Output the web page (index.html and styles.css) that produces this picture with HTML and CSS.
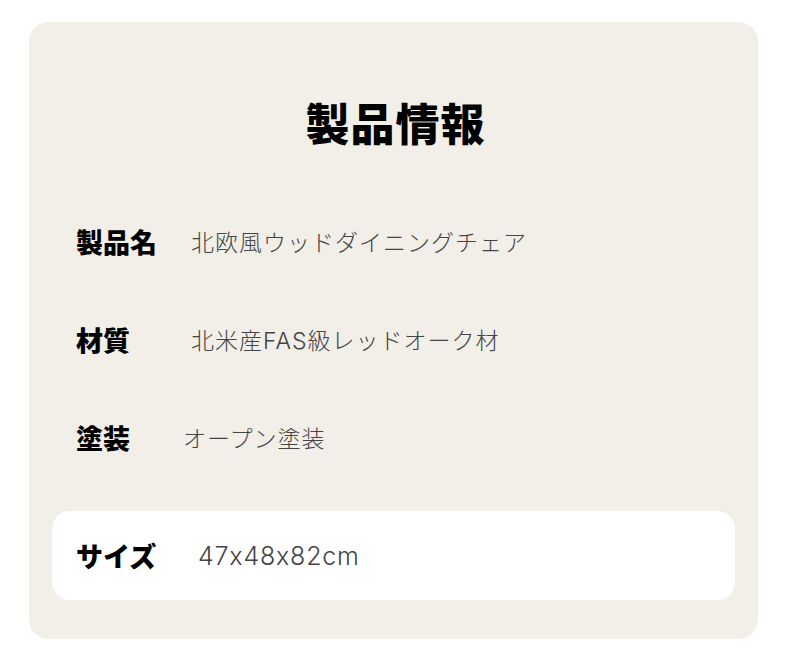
FILE: index.html
```html
<!DOCTYPE html>
<html lang="ja">
<head>
<meta charset="utf-8">
<link rel="stylesheet" href="styles.css">
</head>
<body>
<section class="card">
  <h1 class="title">製品情報</h1>
  <div class="row row-name">
    <span class="label">製品名</span>
    <span class="value">北欧風ウッドダイニングチェア</span>
  </div>
  <div class="row row-material">
    <span class="label">材質</span>
    <span class="value">北米産FAS級レッドオーク材</span>
  </div>
  <div class="row row-finish">
    <span class="label">塗装</span>
    <span class="value">オープン塗装</span>
  </div>
  <div class="row row-size highlight">
    <span class="label">サイズ</span>
    <span class="value">47x48x82cm</span>
  </div>
</section>
</body>
</html>
```
FILE: styles.css
```css
html, body {
  margin: 0;
  padding: 0;
  background: #ffffff;
}
body {
  font-family: "Noto Sans CJK JP", "Noto Sans", sans-serif;
  padding: 22px 0 0 29px;
}
.card {
  box-sizing: border-box;
  width: 729px;
  height: 617px;
  background: #f2eee8;
  border-radius: 20px;
  padding: 70px 23px 39px 23px;
  display: flex;
  flex-direction: column;
}
.title {
  margin: 0;
  height: 60px;
  line-height: 60px;
  text-align: center;
  font-size: 44px;
  font-weight: 900;
  color: #000;
  letter-spacing: 1px;
  padding-left: 4px;
}
.row {
  display: flex;
  align-items: center;
  height: 98px;
  padding-left: 24px;
}
.row-name { margin-top: 40px; }
.label {
  font-size: 27px;
  font-weight: 900;
  color: #000;
  flex: none;
}
.value {
  font-family: "Inter", "Noto Sans CJK JP", sans-serif;
  font-feature-settings: "calt" 0;
  font-size: 23px;
  font-weight: 300;
  color: #444;
  letter-spacing: 1px;
}
.row-name .label, .row-material .label { width: 115px; }
.row-finish .label { width: 107px; }
.row-size .label { width: 122px; }
.highlight {
  margin-top: 25px;
  height: 89px;
  background: #ffffff;
  border-radius: 18px;
}
.row-size .value {
  font-size: 25px;
  letter-spacing: 0.8px;
}
```
